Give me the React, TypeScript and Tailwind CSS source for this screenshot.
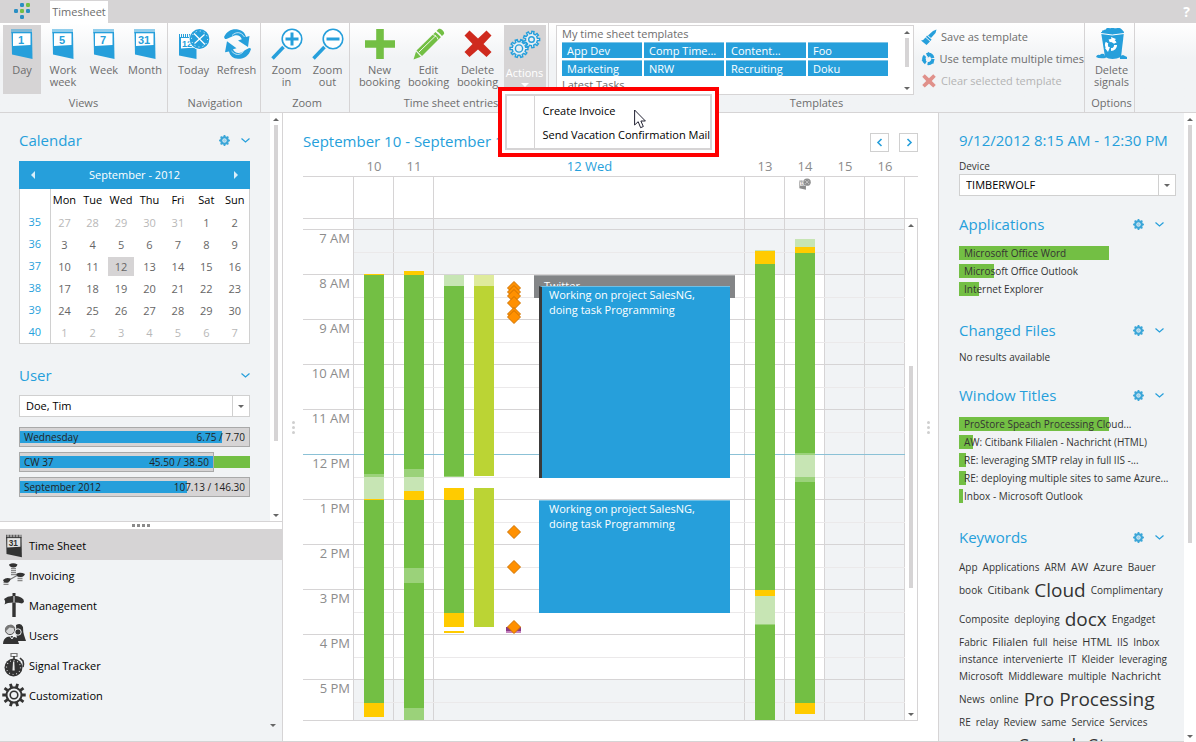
import { Fragment, type ReactNode } from 'react'
import clsx from 'clsx'

const GRID = 'grid grid-cols-[51px_40px_40px_1fr_40px_40px_40px_40px]'

const weeks = [
  { week: 35, days: [27, 28, 29, 30, 31, 1, 2] },
  { week: 36, days: [3, 4, 5, 6, 7, 8, 9] },
  { week: 37, days: [10, 11, 12, 13, 14, 15, 16] },
  { week: 38, days: [17, 18, 19, 20, 21, 22, 23] },
  { week: 39, days: [24, 25, 26, 27, 28, 29, 30] },
  { week: 40, days: [1, 2, 3, 4, 5, 6, 7] },
]

const hours = [
  '7 AM',
  '8 AM',
  '9 AM',
  '10 AM',
  '11 AM',
  '12 PM',
  '1 PM',
  '2 PM',
  '3 PM',
  '4 PM',
  '5 PM',
]

const tones = {
  green: 'bg-[#73bf44]',
  mid: 'bg-[#9bd27a]',
  light: 'bg-[#c7e5b4]',
  yellow: 'bg-[#ffcb00]',
  lime: 'bg-[#bbd434]',
  paleLime: 'bg-[#dfeb9c]',
}

type Segment = [keyof typeof tones, number, number]

// [tone, top, bottom] measured from the top of the visible time range
const signals: Record<string, Segment[]> = {
  mon: [
    ['yellow', 55, 56],
    ['green', 56, 255],
    ['mid', 255, 258],
    ['light', 258, 280],
    ['yellow', 280, 281],
    ['green', 281, 484],
    ['yellow', 484, 498],
  ],
  tue: [
    ['yellow', 52, 56],
    ['green', 56, 250],
    ['mid', 250, 258],
    ['light', 258, 272],
    ['yellow', 272, 281],
    ['green', 281, 349],
    ['mid', 349, 364],
    ['green', 364, 489],
    ['mid', 489, 501],
  ],
  wed: [
    ['light', 56, 67],
    ['green', 67, 257],
    ['mid', 257, 258],
    ['yellow', 269, 281],
    ['green', 281, 394],
    ['yellow', 394, 408],
    ['yellow', 412, 414],
  ],
  wedActive: [
    ['paleLime', 56, 67],
    ['lime', 67, 257],
    ['lime', 269, 408],
  ],
  thu: [
    ['light', 31, 32],
    ['yellow', 32, 45],
    ['green', 45, 371],
    ['yellow', 371, 377],
    ['light', 377, 405],
    ['mid', 405, 406],
    ['green', 406, 501],
  ],
  fri: [
    ['light', 20, 28],
    ['yellow', 28, 34],
    ['green', 34, 234],
    ['mid', 234, 236],
    ['light', 236, 258],
    ['mid', 258, 263],
    ['green', 263, 484],
    ['yellow', 484, 495],
  ],
}

const markers = [69, 73, 77, 84, 95, 98, 313, 348, 408]

const templates = ['App Dev', 'Comp Time...', 'Content...', 'Foo', 'Marketing', 'NRW', 'Recruiting', 'Doku']

const applications: [string, number][] = [
  ['Microsoft Office Word', 150],
  ['Microsoft Office Outlook', 35],
  ['Internet Explorer', 20],
]

const windowTitles: [string, number][] = [
  ['ProStore Speach Processing Cloud...', 150],
  ['AW: Citibank Filialen - Nachricht (HTML)', 14],
  ['RE: leveraging SMTP relay in full IIS -...', 7],
  ['RE: deploying multiple sites to same Azure...', 7],
  ['Inbox - Microsoft Outlook', 4],
]

// 1 = small, 2 = medium, 3 = large
const keywords: [string, 1 | 2 | 3][][] = [
  [['App', 1], ['Applications', 1], ['ARM', 1], ['AW', 2], ['Azure', 2], ['Bauer', 1]],
  [['book', 1], ['Citibank', 2], ['Cloud', 3], ['Complimentary', 1]],
  [['Composite', 1], ['deploying', 1], ['docx', 3], ['Engadget', 1]],
  [['Fabric', 1], ['Filialen', 2], ['full', 1], ['heise', 1], ['HTML', 2], ['IIS', 1], ['Inbox', 1]],
  [['instance', 1], ['intervenierte', 1], ['IT', 1], ['Kleider', 1], ['leveraging', 1]],
  [['Microsoft', 1], ['Middleware', 1], ['multiple', 1], ['Nachricht', 2]],
  [['News', 1], ['online', 1], ['Pro Processing', 3]],
  [['RE', 1], ['relay', 1], ['Review', 1], ['same', 1], ['Service', 1], ['Services', 1]],
  [['store', 1], ['SMTP', 1], ['Speech', 3], ['Store', 3]],
]

function gear(cx: number, cy: number, teeth: number, outer: number, inner: number) {
  const step = (Math.PI * 2) / teeth
  const at = (r: number, a: number) => `${(cx + r * Math.cos(a)).toFixed(2)} ${(cy + r * Math.sin(a)).toFixed(2)}`
  let d = ''
  for (let i = 0; i < teeth; i++) {
    const a = i * step
    d += `${i ? 'L' : 'M'}${at(inner, a - step * 0.27)}L${at(outer, a - step * 0.19)}L${at(outer, a + step * 0.19)}L${at(inner, a + step * 0.27)}`
  }
  return d + 'Z'
}

function CalendarIcon({ label, dark, className }: { label: string; dark?: boolean; className: string }) {
  const color = dark ? '#333333' : '#269fdb'
  return (
    <svg viewBox="0 0 24 32" className={className}>
      <path d="M1.500 4 22 4 22.500 31 2 26.500Z" fill={color} />
      <path d="M3 5H20.500V17L3 18Z" fill={dark ? '#e4e4e4' : '#fff'} />
      <path d="M1.500 3H22" stroke={color} strokeWidth="4" strokeDasharray="1 1" />
      <path d="M1.500 5H22" stroke={color} strokeWidth="1" opacity=".6" />
      <text
        x="11"
        y="15.500"
        textAnchor="middle"
        fontFamily="Liberation Sans"
        fontWeight="bold"
        fontSize="11"
        fill={color}
      >
        {label}
      </text>
    </svg>
  )
}

function TodayIcon({ className, color = '#269fdb' }: { className: string; color?: string }) {
  return (
    <svg viewBox="0 0 32 32" className={className}>
      <path d="M1 9 18.500 9 18.500 31 1 27.500Z" fill={color} />
      <path d="M3 10H17.500V19.500L3 20.500Z" fill="#fff" />
      <path d="M1 8H12" stroke={color} strokeWidth="4" strokeDasharray="1 1" />
      <text x="9" y="19" textAnchor="middle" fontFamily="Liberation Sans" fontWeight="bold" fontSize="9" fill={color}>
        12
      </text>
      <circle cx="21.500" cy="11" r="10.500" fill="#fff" />
      <circle cx="21.500" cy="11" r="9.900" fill={color} />
      <circle cx="21.500" cy="11" r="8" fill="none" stroke="#fff" strokeWidth="1" strokeDasharray="1 3.190" />
      <path d="m16 5.500 11 11M26.500 6.500 16.500 15.500" fill="none" stroke="#fff" strokeWidth="1.200" />
    </svg>
  )
}

function RefreshIcon({ className }: { className: string }) {
  return (
    <svg viewBox="0 0 32 32" className={className}>
      <g fill="#269fdb">
        <path d="M3 9C6 3 11 .5 17 1.500c4.500.8 7 3.500 8 7.500l3.500-1-1.500 11-10-6.500 3.800-1.200C19.500 8 17 6.500 13.500 7.500 10 8.300 8 11 4 11Z" />
        <path d="M30 21c-2 7-7 10-13 9.800-5-.3-8-3-9-7.300l-4 .8 2-11 9.500 7-3.500 1c1.500 3.200 4 4.200 7 3.500 4-.8 6-4.200 10-4.800Z" />
      </g>
      <path d="M11 7.500c4-4 9-4 12.500 1.500M22.500 23.500c-4 4-8 4-12-.5" fill="none" stroke="#fff" strokeWidth=".7" />
    </svg>
  )
}

function ZoomIcon({ plus }: { plus?: boolean }) {
  return (
    <svg viewBox="0 0 32 32" className="size-8">
      <path d="M1.500 30.500 12.500 19" stroke="#269fdb" strokeWidth="3.500" />
      <circle cx="21" cy="11" r="9.800" fill="#fff" stroke="#269fdb" strokeWidth="1.600" />
      <path d={plus ? 'M14.500 11h13M21 4.500v13' : 'M14.500 11h13'} stroke="#269fdb" strokeWidth="3" />
    </svg>
  )
}

function PlusIcon() {
  return (
    <svg viewBox="0 0 32 32" className="size-8">
      <path d="M1 16H31M16 1V31" stroke="#73bf44" strokeWidth="7.600" />
    </svg>
  )
}

function PencilIcon() {
  return (
    <svg viewBox="0 0 32 32" className="size-8">
      <path d="M.5 31.500 3 23.500 7.800 28.800Z" fill="#73bf44" />
      <path d="M3.500 22.500 22.500 4l5.500 5L9 28Z" fill="#73bf44" />
      <path d="m23.500 3 2-2c2-1.200 6.500 2.500 5.500 5l-2 2Z" fill="#73bf44" />
      <path d="M22.500 3.500c2.500.5 5 2.500 5.500 5M19.500 6.500c2.500.5 5 2.500 5.500 5M6 24 23 7.500" fill="none" stroke="#fff" strokeWidth=".9" />
    </svg>
  )
}

function CrossIcon({ className, color }: { className: string; color: string }) {
  return (
    <svg viewBox="0 0 32 32" className={className}>
      <path
        d="M7.500 2.500 16 10.500 24.500 2.500 29.500 7.500 21.500 16 29.500 24 24.500 29 16 21.500 7.500 29 2.500 24 10.500 16 2.500 7.500Z"
        fill={color}
      />
    </svg>
  )
}

function GearsIcon() {
  return (
    <svg viewBox="0 0 32 32" className="size-8">
      <g fill="#e9eff3" stroke="#269fdb" strokeWidth="1.400">
        <path d={gear(22.500, 10.500, 9, 8.200, 6)} />
        <circle cx="22.500" cy="10.500" r="2.800" />
        <path d={gear(10, 19.500, 10, 9, 6.800)} />
        <circle cx="10" cy="19.500" r="3.600" />
      </g>
    </svg>
  )
}

function TrashIcon() {
  return (
    <svg viewBox="0 0 32 32" className="size-8">
      <path d="M5 4 28 4 25 29Q16 33 9 29Z" fill="#269fdb" />
      <path d="M6 4c0-3 3-1 4-3s4 0 5-1 4 1 6 0 5 1 7 4Z" fill="#269fdb" />
      <path d="M5 5.500q11 3 23 0" stroke="#fff" strokeWidth="1" fill="none" />
      <path d="M0 29q1-3 4-2 1-2 4-1l2 4q-7 1-10-1ZM24 28l3-1 4 2v2h-7Z" fill="#269fdb" />
      <circle cx="15" cy="17" r="4.600" fill="none" stroke="#fff" strokeWidth="3" strokeDasharray="7 2.600" />
      <path d="m15 9 5 2-4 4ZM9 20l5-1-2 5Z" fill="#fff" />
    </svg>
  )
}

function BrushIcon() {
  return (
    <svg viewBox="0 0 16 16" className="size-4">
      <path d="M15.500.5 14.500 4 10 9 7 6.500 12 2Z" fill="#269fdb" />
      <path d="m6 6.500 4.500 4-1 1.500L5 8Z" fill="#269fdb" />
      <path d="M4.500 8.500 9 12.500 5.500 16 0 11.500Q3 11 4.500 8.500Z" fill="#269fdb" />
    </svg>
  )
}

function CycleIcon() {
  return (
    <svg viewBox="0 0 16 16" className="size-4">
      <circle cx="8" cy="8" r="5" fill="none" stroke="#269fdb" strokeWidth="3.600" strokeDasharray="8.500 2" />
      <path d="m7.500 0 4.500 3-4.500 3.500ZM14.500 8l-1 5.500-4-3ZM.5 9l5-1.500L4.500 13Z" fill="#269fdb" />
    </svg>
  )
}

function SmallGear() {
  return (
    <svg viewBox="0 0 12 12" className="size-[11px]">
      <path d={gear(6, 6, 8, 6, 4.800)} fill="#3ba6d8" />
      <circle cx="6" cy="6" r="2" fill="#9fd0e8" stroke="#f1f3f5" strokeWidth=".8" />
    </svg>
  )
}

function Chevron() {
  return (
    <svg viewBox="0 0 9 5" className="h-[5px] w-[9px]">
      <path d="M.5.500 4.500 4 8.500.5" fill="none" stroke="#269fdb" strokeWidth="1.200" />
    </svg>
  )
}

function Triangle({ up, className }: { up?: boolean; className?: string }) {
  return (
    <svg viewBox="0 0 6 3" className={clsx('h-[3px] w-[6px]', className)}>
      <path d={up ? 'M0 3 3 0 6 3Z' : 'M0 0 3 3 6 0Z'} fill="#666" />
    </svg>
  )
}

function InvoiceIcon() {
  return (
    <svg viewBox="0 0 24 24" className="size-6">
      <path d="M11.500 5V13M18 13v6M4 19v3" stroke="#888" strokeWidth="5" strokeDasharray="1.200 .8" />
      <path d="M7 17 16 12" stroke="#777" strokeWidth="1.200" />
      <g fill="#333">
        <path d="M7 1.500q4-2.500 8.500 0-1 3.500-4.500 3T7 1.500ZM14 11q4-2.500 9 0-1 3-4.500 3T14 11ZM1 17q3-3 7.500-1.500Q8.500 19 5 19.500T1 17Z" />
      </g>
    </svg>
  )
}

function ManagementIcon() {
  return (
    <svg viewBox="0 0 24 24" className="size-6">
      <path d="M10.500 0h3v3h-3ZM10.300 9.500h3.400V24h-3.400Z" fill="#333" />
      <path d="M2 6Q6 2.500 11.500 3V9.500Q5 9.500 2.500 11.500 4 8.500 2 6ZM12.500 3Q18 2.500 21.500 6.500L22 9l-2 1.500q-3-1-7.500-1Z" fill="#333" />
    </svg>
  )
}

function UsersIcon() {
  return (
    <svg viewBox="0 0 24 24" className="size-6">
      <path d="M14 2q5-3 7 2 0 5 1 8l2 6h-9Z" fill="#333" />
      <path d="M1 21q0-5 4-7l5-1 5 2 2 6Z" fill="#333" />
      <circle cx="8" cy="7" r="4.600" fill="#d5d6d7" stroke="#555" strokeWidth="1" />
      <path d="M3 9Q2 2 9 1.500q3 .5 4.500 4l-6-1Z" fill="#777" />
      <circle cx="16" cy="9" r="3.200" fill="#333" stroke="#f1f3f5" strokeWidth="1" />
      <path d="m7 12 3 4 3-5" fill="none" stroke="#f1f3f5" />
    </svg>
  )
}

function StopwatchIcon() {
  return (
    <svg viewBox="0 0 24 24" className="size-6">
      <path d="M9 .5h6v3H9Z" fill="none" stroke="#777" strokeWidth="1.200" />
      <path d="M12 3v3M18 5l3 3q1 3 0 6" stroke="#333" strokeWidth="1.600" fill="none" />
      <circle cx="11.500" cy="14.500" r="9" fill="#333" />
      <circle cx="11.500" cy="14.500" r="7" fill="none" stroke="#eee" strokeWidth="1.200" strokeDasharray=".8 2.860" />
      <path d="M11 8.500h1.300l.4 9h-2.200Z" fill="#eee" />
    </svg>
  )
}

function CogIcon() {
  return (
    <svg viewBox="0 0 24 24" className="size-6">
      <path d={gear(12, 12, 10, 11.800, 8.500)} fill="#333" />
      <circle cx="12" cy="12" r="6.500" fill="#f1f3f5" />
      <circle cx="12" cy="12" r="3.800" fill="none" stroke="#333" strokeWidth="1.600" />
    </svg>
  )
}

function RibbonGroup({ title, className, children }: { title: string; className?: string; children: ReactNode }) {
  return (
    <section className={clsx('flex flex-col border-r border-[#d6d4d5] pt-0.5', className)}>
      <div className="flex flex-1 justify-center gap-[3px]">{children}</div>
      <h2 className="pb-0.5 text-center text-[11px] leading-[14px]">{title}</h2>
    </section>
  )
}

function RibbonButton({ label, active, className, children }: { label: string; active?: boolean; className: string; children: ReactNode }) {
  return (
    <button
      type="button"
      className={clsx('flex h-[69px] flex-col items-center gap-1 pt-[3px] text-[11px] leading-3', active && 'bg-[#d6d4d5]', className)}
    >
      {children}
      <span>{label}</span>
    </button>
  )
}

function PanelHeading({ title, settings }: { title: string; settings?: boolean }) {
  return (
    <div className="flex h-5 items-center justify-between">
      <h2 className="pb-0.5 text-[15px] leading-[18px] text-[#269fdb]">{title}</h2>
      <div className="flex items-center gap-[11px] pb-0.5">
        {settings && (
          <button type="button" aria-label={`${title} settings`}>
            <SmallGear />
          </button>
        )}
        <button type="button" aria-label={`Collapse ${title}`}>
          <Chevron />
        </button>
      </div>
    </div>
  )
}

function SelectBox({ id, value }: { id: string; value: string }) {
  return (
    <div className="relative h-[22px] border border-[#d0d0d0] bg-white">
      <select id={id} aria-label={id} className="block h-5 w-full appearance-none pl-1.5 text-[11px] text-black">
        <option>{value}</option>
      </select>
      <span className="pointer-events-none absolute inset-y-0 right-0 flex w-[17px] items-center justify-center border-l border-[#d0d0d0]">
        <Triangle className="h-1 w-2" />
      </span>
    </div>
  )
}

function ScrollTrack({ className, thumb }: { className?: string; thumb: string }) {
  return (
    <div className={clsx('flex shrink-0 flex-col items-center bg-white', className)}>
      <Triangle up className="mt-[5px] mb-1 shrink-0" />
      <div className="flex min-h-0 w-1 flex-1 flex-col">
        <div className={clsx('w-1 bg-[#d6d4d5]', thumb)} />
      </div>
      <Triangle className="my-1 shrink-0" />
    </div>
  )
}

function ProgressRow({ label, value, fill, over }: { label: string; value: string; fill: string; over?: boolean }) {
  return (
    <div className="flex h-5 items-center">
      <div className={clsx('relative h-5 border border-[#a9a9a9] bg-[#d6d4d5]', over ? 'w-[195px]' : 'w-full')}>
        <div className={clsx('absolute top-[3px] left-0 h-3 bg-[#269fdb]', fill)} />
        <div className="relative flex justify-between px-1 text-[10px] leading-[18px] text-[#222]">
          <span>{label}</span>
          <span>{value}</span>
        </div>
      </div>
      {over && <div className="h-3 flex-1 bg-[#73bf44]" />}
    </div>
  )
}

function BarList({ items }: { items: [string, number][] }) {
  return (
    <ul className="mt-[11px] flex flex-col gap-1">
      {items.map(([label, width]) => (
        <li key={label} className="relative h-[14px] text-[10px] leading-[14px] whitespace-nowrap text-[#333]">
          <div className="absolute inset-y-0 left-0 bg-[#73bf44]" style={{ width }} />
          <span className="relative pl-[5px]">{label}</span>
        </li>
      ))}
    </ul>
  )
}

function SignalBar({ segments, className }: { segments: Segment[]; className: string }) {
  return (
    <Fragment>
      {segments.map(([tone, top, bottom]) => (
        <div key={top} className={clsx('absolute w-5', tones[tone], className)} style={{ top, height: bottom - top }} />
      ))}
    </Fragment>
  )
}

function Ribbon() {
  return (
    <div className="flex h-[90px] shrink-0 border-b border-[#d6d4d5] bg-gradient-to-b from-white to-[#f1f3f5] to-40% text-[#6d6d6d]">
      <RibbonGroup title="Views" className="w-[168px]">
        <RibbonButton label="Day" active className="w-[38px]">
          <CalendarIcon label="1" className="h-8 w-6" />
        </RibbonButton>
        <RibbonButton label="Work week" className="w-[38px]">
          <CalendarIcon label="5" className="h-8 w-6" />
        </RibbonButton>
        <RibbonButton label="Week" className="w-[38px]">
          <CalendarIcon label="7" className="h-8 w-6" />
        </RibbonButton>
        <RibbonButton label="Month" className="w-[38px]">
          <CalendarIcon label="31" className="h-8 w-6" />
        </RibbonButton>
      </RibbonGroup>
      <RibbonGroup title="Navigation" className="w-[93px] pl-0.5">
        <RibbonButton label="Today" className="w-10">
          <TodayIcon className="size-8" />
        </RibbonButton>
        <RibbonButton label="Refresh" className="w-10">
          <RefreshIcon className="size-8" />
        </RibbonButton>
      </RibbonGroup>
      <RibbonGroup title="Zoom" className="w-[89px] pl-1">
        <RibbonButton label="Zoom in" className="w-[38px]">
          <ZoomIcon plus />
        </RibbonButton>
        <RibbonButton label="Zoom out" className="w-[38px]">
          <ZoomIcon />
        </RibbonButton>
      </RibbonGroup>
      <RibbonGroup title="Time sheet entries" className="w-[199px] pl-1">
        <RibbonButton label="New booking" className="w-[46px]">
          <PlusIcon />
        </RibbonButton>
        <RibbonButton label="Edit booking" className="w-[46px]">
          <PencilIcon />
        </RibbonButton>
        <RibbonButton label="Delete booking" className="w-[46px]">
          <CrossIcon className="size-8" color="#cf2a1e" />
        </RibbonButton>
        <div className="relative">
          <button
            type="button"
            className="flex h-[69px] w-[42px] flex-col items-center bg-[#d6d4d5] pt-1 text-[11px] leading-3 text-white"
          >
            <GearsIcon />
            <span className="mt-1.5">Actions</span>
            <svg viewBox="0 0 8 4" className="mt-1 h-1 w-2">
              <path d="M0 0 4 4 8 0Z" fill="#fff" />
            </svg>
          </button>
          <ActionsMenu />
        </div>
      </RibbonGroup>
      <RibbonGroup title="Templates" className="max-w-[536px] min-w-0 flex-1">
        <div className="flex w-full min-w-0 gap-[7px] pl-[7px]">
          <div className="flex h-[70px] min-w-0 flex-1 overflow-hidden border border-[#d6d4d5] bg-white">
            <div className="flex-1 overflow-hidden pl-[5px] text-[11px]">
              <p className="h-4 leading-4">My time sheet templates</p>
              <div className="grid grid-cols-4 gap-0.5 pr-[13px] text-white">
                {templates.map((name) => (
                  <button
                    key={name}
                    type="button"
                    className="h-4 truncate border-t border-[#7fc4e6] bg-[#269fdb] px-[5px] text-left leading-[15px]"
                  >
                    {name}
                  </button>
                ))}
              </div>
              <p className="pt-px leading-4">Latest Tasks</p>
            </div>
            <ScrollTrack className="w-3" thumb="h-[29px]" />
          </div>
          <div className="flex w-[163px] flex-col pt-px text-[11px]">
            <button type="button" className="flex h-[22px] items-center gap-1 whitespace-nowrap">
              <BrushIcon />
              Save as template
            </button>
            <button type="button" className="flex h-[22px] items-center gap-1 whitespace-nowrap">
              <CycleIcon />
              Use template multiple times
            </button>
            <button type="button" disabled className="flex h-[22px] items-center gap-1 whitespace-nowrap text-[#b4b4b4]">
              <CrossIcon className="size-4" color="#e0908a" />
              Clear selected template
            </button>
          </div>
        </div>
      </RibbonGroup>
      <RibbonGroup title="Options" className="w-[50px] pl-1">
        <RibbonButton label="Delete signals" className="w-[38px]">
          <TrashIcon />
        </RibbonButton>
      </RibbonGroup>
    </div>
  )
}

function ActionsMenu() {
  return (
    <div className="absolute top-[62px] -left-1.5 z-20 w-[221px] border-4 border-[#ff0000] bg-white p-[3px]">
      <div className="h-14 border-2 border-[#d6d4d5] bg-white">
        <div
          role="menu"
          className="ml-[27px] flex h-full flex-col justify-center border-l border-[#d6d4d5] pt-0.5 text-[11px] text-black"
        >
          <button type="button" role="menuitem" className="h-6 pl-2 text-left whitespace-nowrap">
            Create Invoice
          </button>
          <button type="button" role="menuitem" className="h-6 pl-2 text-left whitespace-nowrap">
            Send Vacation Confirmation Mail
          </button>
        </div>
      </div>
      <svg viewBox="0 0 12 20" className="absolute top-[18px] left-[132px] h-5 w-3">
        <path d="M.6 1V16l3.600-3.300 2.400 6 2.700-1.200L6.900 12h4.500Z" fill="#fff" stroke="#223" strokeWidth="1" />
      </svg>
    </div>
  )
}

function MonthCalendar() {
  return (
    <div className="mt-[10px]">
      <div className="flex h-7 items-center justify-between bg-[#269fdb] px-3 text-[11px] text-white">
        <button type="button" aria-label="Previous month">
          <svg viewBox="0 0 4 8" className="h-2 w-1">
            <path d="M4 0 0 4 4 8Z" fill="#d9effa" />
          </svg>
        </button>
        September - 2012
        <button type="button" aria-label="Next month">
          <svg viewBox="0 0 4 8" className="h-2 w-1">
            <path d="M0 0 4 4 0 8Z" fill="#d9effa" />
          </svg>
        </button>
      </div>
      <div className="border border-t-0 border-[#d0d0d0] bg-white">
        <table className="w-full table-fixed border-collapse text-center text-[11px] leading-4 text-[#666]">
          <thead>
            <tr className="h-[22px] text-black">
              <th className="w-[30px] border-r border-[#d0d0d0]" />
              {['Mon', 'Tue', 'Wed', 'Thu', 'Fri', 'Sat', 'Sun'].map((day) => (
                <th key={day} className="p-0 font-normal">
                  {day}
                </th>
              ))}
            </tr>
          </thead>
          <tbody>
            {weeks.map(({ week, days }, row) => (
              <tr key={week} className="h-[22px]">
                <th className="border-r border-[#d0d0d0] p-0 font-normal text-[#269fdb]">{week}</th>
                {days.map((day) => {
                  const outside = (row === 0 && day > 20) || row === 5
                  return (
                    <td key={day} className={clsx('p-0', outside && 'text-[#b8b8b8]')}>
                      <span className={clsx('mx-auto block h-[19px] w-[26px] leading-[19px]', row === 2 && day === 12 && 'bg-[#d6d4d5]')}>
                        {day}
                      </span>
                    </td>
                  )
                })}
              </tr>
            ))}
          </tbody>
        </table>
      </div>
    </div>
  )
}

function LeftPanel() {
  const nav = [
    { label: 'Time Sheet', icon: <CalendarIcon label="31" dark className="size-6" /> },
    { label: 'Invoicing', icon: <InvoiceIcon /> },
    { label: 'Management', icon: <ManagementIcon /> },
    { label: 'Users', icon: <UsersIcon /> },
    { label: 'Signal Tracker', icon: <StopwatchIcon /> },
    { label: 'Customization', icon: <CogIcon /> },
  ]
  return (
    <aside className="flex w-[283px] shrink-0 flex-col border-r border-[#d6d4d5]">
      <div className="flex min-h-0 flex-1 border-b border-[#d6d4d5]">
        <div className="flex-1 overflow-hidden bg-[#f1f3f5] pt-[18px] pr-5 pl-[19px]">
          <PanelHeading title="Calendar" settings />
          <MonthCalendar />
          <div className="mt-[22px]">
            <PanelHeading title="User" />
          </div>
          <div className="mt-[9px]">
            <SelectBox id="User" value="Doe, Tim" />
          </div>
          <div className="mt-[10px] flex flex-col gap-[5px]">
            <ProgressRow label="Wednesday" value="6.75 / 7.70" fill="w-[88%]" />
            <ProgressRow label="CW 37" value="45.50 / 38.50" fill="w-full" over />
            <ProgressRow label="September 2012" value="107.13 / 146.30" fill="w-[73%]" />
          </div>
        </div>
        <ScrollTrack className="w-3" thumb="h-[82%]" />
      </div>
      <div className="flex h-[7px] shrink-0 items-center justify-center gap-0.5 bg-white">
        {[0, 1, 2, 3].map((dot) => (
          <span key={dot} className="size-[3px] bg-[#8a8a8a]" />
        ))}
      </div>
      <nav className="relative h-[213px] shrink-0 border-b border-[#d6d4d5] bg-[#f1f3f5] text-[11px] text-black">
        {nav.map(({ label, icon }, i) => (
          <a
            key={label}
            href="#"
            className={clsx('flex items-center gap-[3px] pl-0.5', i === 0 ? 'h-[31px] bg-[#d6d4d5] pt-0.5' : 'h-[30px]')}
          >
            {icon}
            <span className="pt-0.5">{label}</span>
          </a>
        ))}
        <Triangle className="absolute right-1.5 bottom-[14px]" />
      </nav>
    </aside>
  )
}

function SplitterDots() {
  return (
    <div className="flex w-5 shrink-0 flex-col items-center justify-center gap-0.5">
      {[0, 1, 2].map((dot) => (
        <span key={dot} className="size-[3px] rounded-full bg-[#cfcfcf]" />
      ))}
    </div>
  )
}

function Booking({ className }: { className: string }) {
  return (
    <div
      className={clsx(
        'absolute right-[15px] left-[105px] border-t border-t-[#6fc0e6] bg-[#269fdb] text-[11px] leading-[15px] text-white',
        className,
      )}
    >
      Working on project SalesNG,
      <br />
      doing task Programming
    </div>
  )
}

function Schedule() {
  return (
    <div className="flex min-h-0 flex-1 border-b border-[#d6d4d5]">
      <div className="relative min-w-0 flex-1 overflow-hidden">
        {/* working time shading */}
        <div className={clsx('absolute inset-0', GRID)}>
          <div className="border-r border-[#d6d4d5]" />
          {[10, 11, 12, 13, 14, 15, 16].map((day) => (
            <div key={day} className="border-r border-[#d6d4d5] bg-[#f1f3f5]">
              {day < 15 && <div className="mt-14 h-[404px] bg-white" />}
            </div>
          ))}
        </div>
        <div className="relative">
          <div className="h-[11px] border-b border-[#d6d4d5]" />
          {hours.map((hour) => (
            <div key={hour} className={clsx('flex h-[45px] border-b', hour === '11 AM' ? 'border-[#8bc1d6]' : 'border-[#d6d4d5]')}>
              <span className="w-[51px] pr-1 text-right text-[13px] leading-4 text-[#8c8c8c]">{hour}</span>
              <div className="h-[23px] flex-1 border-b border-[#ebe9ea]" />
            </div>
          ))}
        </div>
        <div className={clsx('absolute inset-0', GRID)}>
          <div />
          <div className="relative">
            <SignalBar segments={signals.mon} className="left-[10px]" />
          </div>
          <div className="relative">
            <SignalBar segments={signals.tue} className="left-[10px]" />
          </div>
          <div className="relative">
            <SignalBar segments={signals.wed} className="left-[10px]" />
            <SignalBar segments={signals.wedActive} className="left-10" />
            <div className="absolute top-[408px] left-[72px] h-1 w-[15px] bg-[#8a3a86]" />
            <div className="absolute top-[412px] left-[72px] h-0.5 w-[15px] bg-[#c583bf]" />
            {markers.map((y) => (
              <svg key={y} viewBox="0 0 14 14" className="absolute left-[73px] size-[14px]" style={{ top: y - 7 }}>
                <path d="M7 .5 13.500 7 7 13.500 .5 7Z" fill="#ff9000" stroke="#cf7200" />
              </svg>
            ))}
            <div className="absolute top-14 right-[10px] left-[100px] h-[23px] overflow-hidden border-t border-[#a5a7a9] bg-[#838587] pt-0.5 pl-[10px] text-[11px] leading-[15px] text-white">
              Twitter
            </div>
            <Booking className="top-[67px] h-[192px] border-l-3 border-l-[#3a3a3a] pl-[7px]" />
            <Booking className="top-[281px] h-[113px] pl-[10px]" />
          </div>
          <div className="relative">
            <SignalBar segments={signals.thu} className="left-[10px]" />
          </div>
          <div className="relative">
            <SignalBar segments={signals.fri} className="left-[10px]" />
          </div>
        </div>
      </div>
      <ScrollTrack className="w-[13px] border-r border-[#d6d4d5]" thumb="mt-[135px] h-[222px]" />
    </div>
  )
}

function CenterPanel() {
  return (
    <main className="flex min-w-0 flex-1 border-b border-[#d6d4d5] bg-white">
      <SplitterDots />
      <div className="flex min-w-0 flex-1 flex-col pt-5 pb-5">
        <div className="flex h-[19px] shrink-0 items-start justify-between">
          <h1 className="text-[15px] leading-4 text-[#269fdb]">September 10 - September 16</h1>
          <div className="flex gap-[10px]">
            {['M5.500 1 2 4.500 5.500 8', 'M2.500 1 6 4.500 2.500 8'].map((d, i) => (
              <button
                key={d}
                type="button"
                aria-label={i ? 'Next week' : 'Previous week'}
                className="flex size-[19px] items-center justify-center border border-[#d0d0d0]"
              >
                <svg viewBox="0 0 8 9" className="h-[9px] w-2">
                  <path d={d} fill="none" stroke="#269fdb" strokeWidth="1.600" />
                </svg>
              </button>
            ))}
          </div>
        </div>
        <div className="mt-[5px] flex h-5 shrink-0 border-b border-[#d6d4d5]">
          <div className={clsx('flex-1 text-center text-[13px] leading-[18px] text-[#8c8c8c]', GRID)}>
            <span />
            <span>10</span>
            <span>11</span>
            <span className="text-[#269fdb]">12 Wed</span>
            <span>13</span>
            <span>14</span>
            <span>15</span>
            <span>16</span>
          </div>
          <div className="w-[13px]" />
        </div>
        <div className="flex h-[42px] shrink-0 border-b border-[#d6d4d5]">
          <div className={clsx('flex-1', GRID)}>
            {[0, 10, 11, 12, 13, 14, 15, 16].map((day) => (
              <div key={day} className="flex justify-center border-r border-[#d6d4d5] pt-px">
                {day === 14 && <TodayIcon className="size-3" color="#8c8c8c" />}
              </div>
            ))}
          </div>
          <div className="w-[13px]" />
        </div>
        <Schedule />
      </div>
      <SplitterDots />
    </main>
  )
}

function RightPanel() {
  return (
    <aside className="flex w-[258px] shrink-0 border-l border-[#d6d4d5]">
      <div className="min-w-0 flex-1 overflow-hidden border-b border-[#d6d4d5] bg-[#f1f3f5] pt-[18px] pl-5">
        <h2 className="pb-0.5 text-[15px] leading-[18px] whitespace-nowrap text-[#269fdb]">9/12/2012 8:15 AM - 12:30 PM</h2>
        <div className="mt-[7px] pr-2">
          <label htmlFor="Device" className="block text-[10px] leading-4 text-[#333]">
            Device
          </label>
          <SelectBox id="Device" value="TIMBERWOLF" />
        </div>
        <div className="mt-[19px] pr-5">
          <PanelHeading title="Applications" settings />
          <BarList items={applications} />
        </div>
        <div className="mt-[25px] pr-5">
          <PanelHeading title="Changed Files" settings />
          <p className="mt-2 text-[10px] leading-4 text-[#333]">No results available</p>
        </div>
        <div className="mt-[21px] pr-5">
          <PanelHeading title="Window Titles" settings />
          <BarList items={windowTitles} />
        </div>
        <div className="mt-[25px] pr-5">
          <PanelHeading title="Keywords" settings />
          <div className="mt-[11px] text-[#333]">
            {keywords.map((row) => (
              <div
                key={row[0][0]}
                className={clsx('flex items-center gap-[5px] whitespace-nowrap', row.some(([, size]) => size === 3) ? 'h-[29px]' : 'h-[17px]')}
              >
                {row.map(([word, size]) => (
                  <span key={word} className={clsx(size === 1 && 'text-[10px]', size === 2 && 'text-[11px]', size === 3 && 'text-[19px]')}>
                    {word}
                  </span>
                ))}
              </div>
            ))}
          </div>
        </div>
      </div>
      <ScrollTrack className="w-3" thumb="h-[69%]" />
    </aside>
  )
}

export default function App() {
  return (
    <div className="flex h-screen flex-col bg-white font-['Open_Sans',sans-serif] text-[#555]">
      <header className="flex h-[23px] shrink-0 items-end bg-[#d6d4d5]">
        <svg viewBox="0 0 16 16" className="mb-1 ml-3.5 size-4">
          <g fill="#2a8fc4">
            <rect x="6" y="0" width="4" height="4" rx="1.200" />
            <rect x="0" y="6" width="4" height="4" rx="1.200" />
            <rect x="12" y="6" width="4" height="4" rx="1.200" />
            <rect x="6" y="12" width="4" height="4" rx="1.200" />
          </g>
          <g fill="#73bf44">
            <rect x="12" y="0" width="4" height="4" rx="1.200" />
            <rect x="6" y="6" width="4" height="4" rx="1.200" />
          </g>
        </svg>
        <button type="button" className="ml-5 h-[22px] w-[58px] bg-white text-[11px] text-[#6d6d6d]">
          Timesheet
        </button>
        <button type="button" aria-label="Help" className="mr-1.5 ml-auto text-[14px] leading-[23px] font-bold text-white">
          ?
        </button>
      </header>
      <Ribbon />
      <div className="flex min-h-0 flex-1">
        <LeftPanel />
        <CenterPanel />
        <RightPanel />
      </div>
    </div>
  )
}
